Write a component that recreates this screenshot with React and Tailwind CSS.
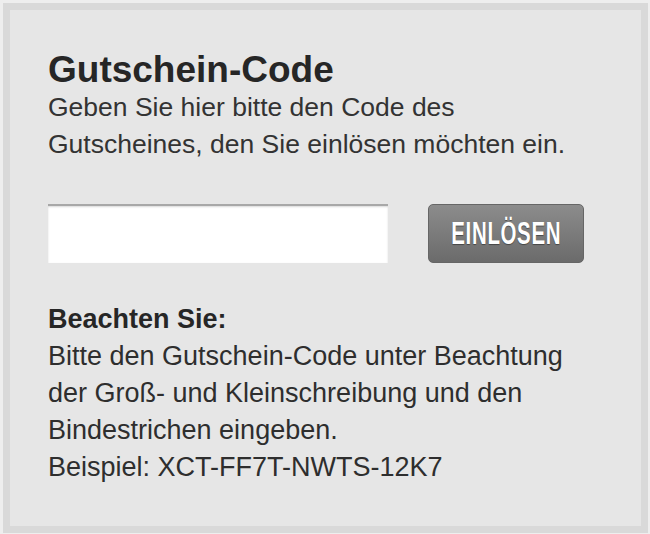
export default function App() {
  return (
    <div className="w-[650px] h-[534px] bg-[#eeeeee] pt-[3px] pl-[3px] pr-[2px] pb-[1px]" style={{ fontFamily: '"Liberation Sans", Arial, sans-serif' }}>
      <div className="w-full h-full bg-[#d9d9d9] p-[7px]">
        <div className="w-full h-full bg-[#e6e6e6] pl-[38px] pt-[40px]">
          <h1 className="text-[37px] leading-[40px] font-bold text-[#262626]">Gutschein-Code</h1>
          <p className="text-[26.5px] leading-[37px] text-[#333333] -mt-[1px]">
            Geben Sie hier bitte den Code des<br />
            Gutscheines, den Sie einlösen möchten ein.
          </p>
          <div className="flex items-center gap-[40px] mt-[41px]">
            <input
              type="text"
              className="w-[340px] h-[59px] bg-white outline-none border-t-2 border-t-[#a8a8a8] shadow-[inset_0_1px_2px_rgba(0,0,0,0.15)]"
            />
            <button className="w-[156px] h-[59px] rounded-[5px] bg-gradient-to-b from-[#8c8c8c] to-[#6b6b6b] border border-[#666666] flex items-center justify-center overflow-hidden">
              <span className="inline-block scale-x-[0.66] text-[31px] font-bold text-white tracking-[1px] leading-none [text-shadow:0_1px_1px_rgba(0,0,0,0.4)]">EINLÖSEN</span>
            </button>
          </div>
          <div className="mt-[38px] text-[27px] leading-[37px] text-[#2e2e2e]">
            <p className="font-bold text-[#262626]">Beachten Sie:</p>
            <p>
              Bitte den Gutschein-Code unter Beachtung<br />
              der Groß- und Kleinschreibung und den<br />
              Bindestrichen eingeben.<br />
              Beispiel: XCT-FF7T-NWTS-12K7
            </p>
          </div>
        </div>
      </div>
    </div>
  );
}
